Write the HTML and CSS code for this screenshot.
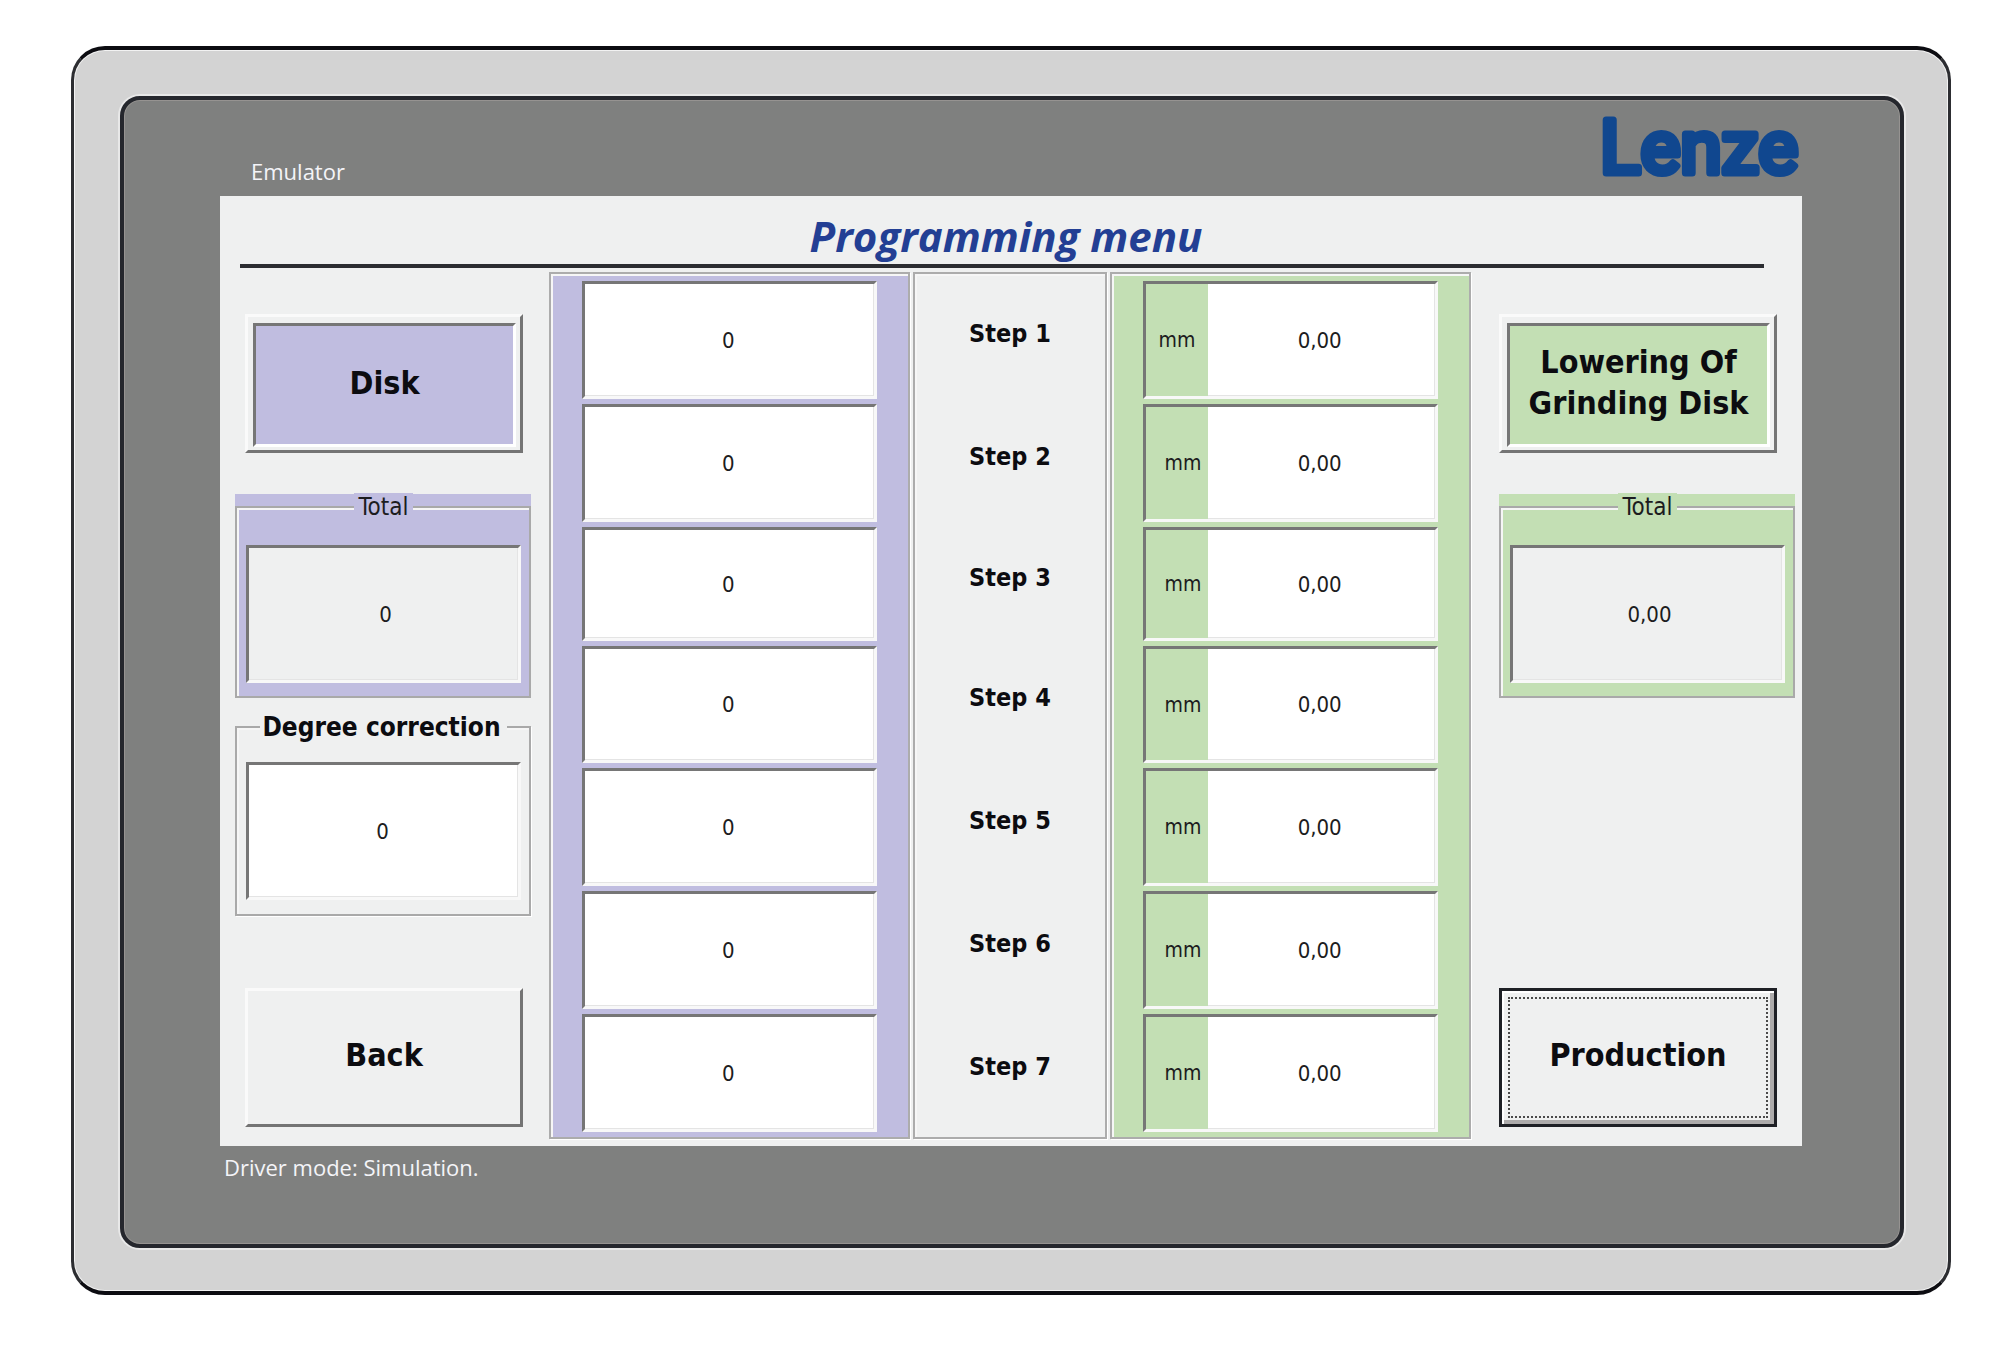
FILE: index.html
```html
<!DOCTYPE html>
<html lang="en">
<head>
    <meta charset="utf-8">
    <title>Programming menu</title>
    <link rel="stylesheet" href="styles.css">
</head>
<body>
    <div class="device">
        <div class="bezel">
            <div class="topbar">
                <span class="emulator">Emulator</span>
                <svg class="logo" width="206" height="92" viewBox="0 0 206 92" role="img" aria-label="Lenze">
                    <text x="4" y="69">Lenze</text>
                </svg>
            </div>
            <div class="screen">
                <h1>Programming menu</h1>
                <div class="content">
                    <div class="side side-left">
                        <button type="button" class="btn framed"><span class="face purple">Disk</span></button>
                        <fieldset class="total purple">
                            <legend class="purple"><label for="total_disk">Total</label></legend>
                            <input type="text" id="total_disk" class="cell readonly" value="0" readonly>
                        </fieldset>
                        <fieldset class="degree">
                            <legend><label for="degree">Degree correction</label></legend>
                            <input type="text" id="degree" class="cell" value="0">
                        </fieldset>
                        <button type="button" class="btn last"><span class="face">Back</span></button>
                    </div>
                    <div class="steps">
                        <div class="panel purple">
                            <input type="text" id="disk1" class="cell" value="0">
                            <input type="text" id="disk2" class="cell" value="0">
                            <input type="text" id="disk3" class="cell" value="0">
                            <input type="text" id="disk4" class="cell" value="0">
                            <input type="text" id="disk5" class="cell" value="0">
                            <input type="text" id="disk6" class="cell" value="0">
                            <input type="text" id="disk7" class="cell" value="0">
                        </div>
                        <div class="panel names">
                            <label for="disk1">Step 1</label>
                            <label for="disk2">Step 2</label>
                            <label for="disk3">Step 3</label>
                            <label for="disk4">Step 4</label>
                            <label for="disk5">Step 5</label>
                            <label for="disk6">Step 6</label>
                            <label for="disk7">Step 7</label>
                        </div>
                        <div class="panel green">
                            <div class="cell unit first"><label for="low1">mm</label><input type="text" id="low1" value="0,00"></div>
                            <div class="cell unit"><label for="low2">mm</label><input type="text" id="low2" value="0,00"></div>
                            <div class="cell unit"><label for="low3">mm</label><input type="text" id="low3" value="0,00"></div>
                            <div class="cell unit"><label for="low4">mm</label><input type="text" id="low4" value="0,00"></div>
                            <div class="cell unit"><label for="low5">mm</label><input type="text" id="low5" value="0,00"></div>
                            <div class="cell unit"><label for="low6">mm</label><input type="text" id="low6" value="0,00"></div>
                            <div class="cell unit"><label for="low7">mm</label><input type="text" id="low7" value="0,00"></div>
                        </div>
                    </div>
                    <div class="side side-right">
                        <button type="button" class="btn framed"><span class="face green">Lowering Of<br>Grinding Disk</span></button>
                        <fieldset class="total green">
                            <legend class="green"><label for="total_low">Total</label></legend>
                            <input type="text" id="total_low" class="cell readonly" value="0,00" readonly>
                        </fieldset>
                        <button type="button" class="btn last default"><span class="face">Production</span></button>
                    </div>
                </div>
            </div>
            <div class="status">Driver mode: Simulation.</div>
        </div>
    </div>
</body>
</html>
```
FILE: styles.css
```css
* {
    box-sizing: border-box;
}

body {
    margin: 0;
    padding: 46px 49px 55px 71px;
    background-color: #fff;
    font-family: "DejaVu Sans Condensed", "Noto Sans", sans-serif;
    font-size: 22px;
    color: #1c1c20;
}

button, input {
    font-family: inherit;
    font-size: inherit;
    color: inherit;
}

/* housing */
.device {
    padding: 46px 44px 43px 46px;
    border: 3px solid #2c2d31;
    border-top: 4px solid #0c0c11;
    border-bottom: 4px solid #0c0c11;
    border-radius: 34px;
    background-color: #d3d3d3;
    box-shadow: inset 0 0 0 1px #f2f2f2;
}

.bezel {
    padding: 0 98px 62px 96px;
    border: 4px solid #25272d;
    border-radius: 20px;
    background-color: #7f807f;
    box-shadow: 0 0 0 2px #e8e8e8, inset 0 0 0 1px #969391;
}

.topbar {
    display: flex;
    justify-content: space-between;
    height: 96px;
    padding-left: 31px;
}

.emulator {
    padding-top: 56px;
}

.emulator, .status {
    font-family: "Open Sans", "Noto Sans", sans-serif;
    font-size: 22px;
    line-height: 30px;
    color: #f4f4f8;
}

.status {
    padding: 6px 4px 0;
}

.logo {
    margin-top: 4px;
}

.logo text {
    font-family: Roboto, sans-serif;
    font-size: 75px;
    font-weight: 400;
    fill: #10478f;
    stroke: #10478f;
    stroke-width: 7px;
    stroke-linecap: round;
    stroke-linejoin: round;
}

/* screen */
.screen {
    padding-bottom: 7px;
    background-color: #eff0f0;
}

h1 {
    height: 72px;
    margin: 0 38px 4px 20px;
    padding-left: 8px;
    border-bottom: 4px solid #2b2c31;
    font-family: "Open Sans", "Noto Sans", sans-serif;
    font-size: 42px;
    font-style: italic;
    font-weight: bold;
    line-height: 80px;
    text-align: center;
    color: #233f94;
}

.content {
    display: flex;
    padding: 0 7px 0 15px;
}

.side {
    display: flex;
    flex: 296 1 0;
    flex-direction: column;
    padding-bottom: 12px;
}

.steps {
    display: grid;
    flex: 922 1 0;
    grid-template-columns: 361fr 195fr 361fr;
    gap: 3px;
    margin: 0 28px 0 18px;
}

.purple {
    background-color: #c0bde0;
}

.green {
    background-color: #c3dfb4;
}

/* step columns */
.panel {
    display: grid;
    grid-template-rows: 118px 118px 114px 117px 118px 118px 118px;
    gap: 5px;
    padding: 7px 31px 5px;
    border: 2px solid #acacac;
    box-shadow: inset 2px 2px 0 #f6f6f6, 1px 1px 0 #fff;
}

.names {
    padding-left: 0;
    padding-right: 0;
}

.names label {
    display: flex;
    align-items: center;
    justify-content: center;
    padding-bottom: 14px;
    font-size: 25px;
    font-weight: bold;
    color: #0c0c10;
}

.cell {
    width: 100%;
    min-width: 0;
    padding: 0 2px 0 0;
    border: 3px solid #767676;
    border-right-color: #f8f8f8;
    border-bottom-color: #f8f8f8;
    border-radius: 0;
    background-color: #fff;
    box-shadow: inset -1px -1px 0 #e4e4e4;
    text-align: center;
}

.readonly {
    padding: 0 0 0 4px;
    background-color: #eff0f0;
}

.unit {
    display: flex;
    padding: 0;
}

.unit label {
    display: flex;
    align-items: center;
    justify-content: flex-end;
    width: 62px;
    padding-right: 7px;
    background-color: #c3dfb4;
    font-size: 21px;
}

.unit.first label {
    padding-right: 13px;
}

.unit input {
    flex: 1;
    min-width: 0;
    padding: 0 4px 0 0;
    border: 0;
    background: none;
    text-align: center;
}

/* side columns */
.btn {
    display: flex;
    height: 139px;
    margin: 0 8px 0 10px;
    padding: 0;
    border: 3px solid #fafafa;
    border-right-color: #747474;
    border-bottom-color: #747474;
    background-color: #eff0f0;
    font-size: 32px;
    font-weight: bold;
    line-height: 41px;
    color: #0c0c10;
}

.side-right .btn {
    margin-left: 0;
    margin-right: 18px;
}

.side .framed {
    margin-top: 42px;
    padding: 6px 4px 3px 5px;
}

.face {
    display: flex;
    flex: 1;
    align-items: center;
    align-self: stretch;
    justify-content: center;
    padding-bottom: 4px;
}

.framed .face {
    border: 3px solid #767676;
    border-right-color: #fff;
    border-bottom-color: #fff;
}

.side .last {
    margin-top: auto;
}

.default {
    padding: 2px;
    border: 3px solid #1e2025;
    box-shadow: inset 2px 2px 0 #fff, inset -4px -4px 0 #adabab;
}

.default .face {
    margin: 4px;
    border: 2px dotted #4a4a4a;
}

fieldset {
    display: flex;
    min-width: 0;
    margin: 0;
    padding: 0 8px 13px 9px;
    border: 2px solid #a9a9a9;
    box-shadow: inset 2px 2px 0 #f6f6f6, 1px 1px 0 #fff;
}

fieldset .cell {
    height: 138px;
}

legend {
    margin: 0 auto;
    padding: 0 4px;
}

.total {
    margin-top: 40px;
}

/* the fill runs a little above the group line */
.total.purple {
    box-shadow: inset 2px 2px 0 #f6f6f6, 0 -12px 0 #c0bde0;
}

.total.green {
    box-shadow: inset 2px 2px 0 #f6f6f6, 0 -12px 0 #c3dfb4;
}

.total legend {
    margin-bottom: 24px;
    font-size: 24px;
    line-height: 28px;
}

.degree {
    margin-top: 14px;
    padding-bottom: 14px;
}

.degree legend {
    margin-bottom: 20px;
    padding: 0 6px 0 2px;
    background-color: #eff0f0;
    font-size: 26px;
    font-weight: bold;
    line-height: 30px;
    color: #0c0c10;
}
```
